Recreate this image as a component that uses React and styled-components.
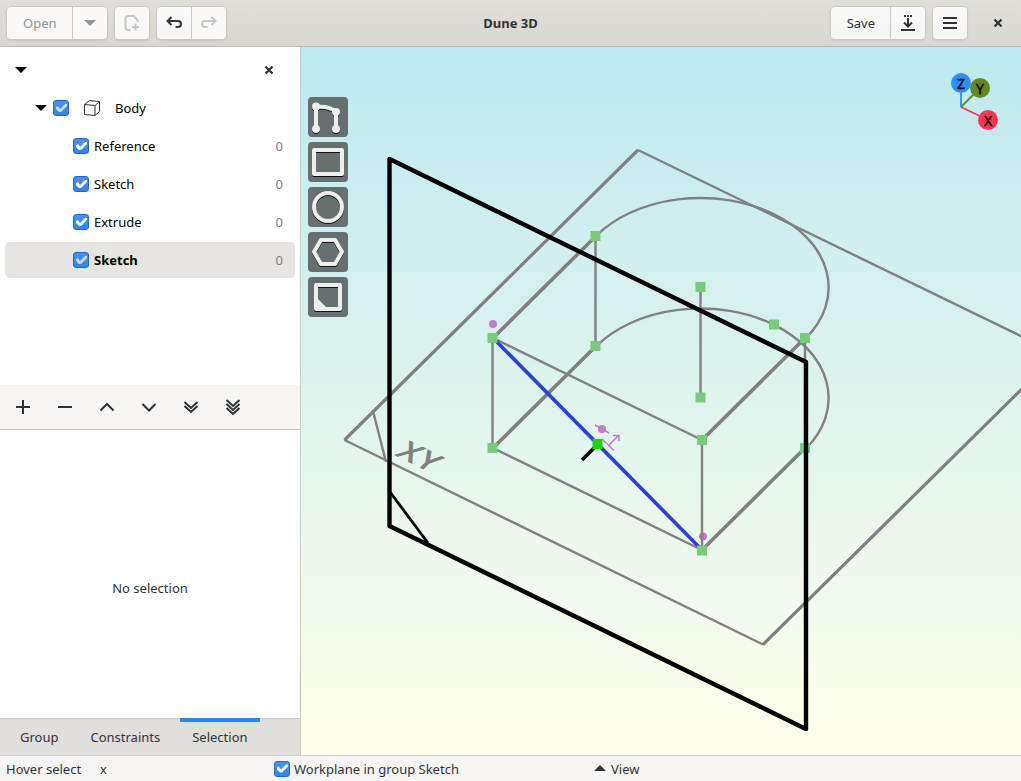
// src/App.jsx
import React, { useState } from 'react';
import styled, { createGlobalStyle } from 'styled-components';

// --- Data ---
const GROUPS = [
  { id: 'reference', name: 'Reference', count: 0 },
  { id: 'sketch-1', name: 'Sketch', count: 0 },
  { id: 'extrude', name: 'Extrude', count: 0 },
  { id: 'sketch-2', name: 'Sketch', count: 0 },
];
const TABS = ['Group', 'Constraints', 'Selection'];

// projected model, in canvas coordinates
const EDGES = [
  [493, 338, 596, 236, 3.6], [493, 448, 596, 346, 3.6],
  [702, 440, 805, 338, 3.6], [702, 550, 805, 448, 3.6],
  [595.5, 236, 595.5, 346, 2.4], [492.5, 338, 492.5, 448, 2.4],
  [805, 338, 805, 448, 2.4], [700.5, 287, 700.5, 397, 2.4],
  [493, 338, 702, 440, 2.4], [493, 448, 702, 550, 2.4],
];
const POINTS = [
  [595.5, 236], [700.5, 287], [774, 324.5], [805, 338], [492.5, 338], [595.5, 346],
  [700.5, 397.5], [702, 440], [492.5, 448], [805, 448], [702, 550.5],
];

// --- Global ---
const GlobalStyle = createGlobalStyle`
  * { box-sizing: border-box; }
  body { margin: 0; background: #f6f5f4; }
  body, button, input {
    font-family: "Noto Sans", "Open Sans", sans-serif; font-size: 13px; line-height: 18px; color: #2e3436;
  }
`;

// --- Styled ---
const Window = styled.div`
  display: flex; flex-direction: column; height: 100vh; overflow: hidden;
`;
const HeaderBar = styled.header`
  display: grid; grid-template-columns: 1fr auto 1fr; align-items: center;
  flex: none; height: 47px; padding: 0 6px;
  background: linear-gradient(#e1dedb, #dad6d2); border-bottom: 1px solid #bfb8b1;
`;
const Title = styled.h1` margin: 0; font-size: 13px; font-weight: bold; `;
const HeaderSide = styled.div`
  display: flex; gap: 6px; justify-content: ${p => (p.$end ? 'flex-end' : 'flex-start')};
`;
const WindowControls = styled.div` display: flex; padding-left: 7px; `;
const Linked = styled.div`
  display: flex; border: 1px solid #cdc7c2; border-radius: 5px; overflow: hidden;
  box-shadow: 0 1px 2px rgba(0, 0, 0, 0.07);
`;
const HeaderButton = styled.button`
  display: flex; align-items: center; justify-content: center;
  height: 32px; min-width: 34px; padding: ${p => (p.$text ? '0 15px 0 16px' : '0')}; border: 0;
  background: linear-gradient(#fbfafa, #f6f5f4);
  & + & { border-left: 1px solid #cdc7c2; min-width: 35px; }
  &:disabled { background: #faf9f8; color: #929595; }
`;
const FlatButton = styled.button`
  display: flex; align-items: center; justify-content: center; flex: none;
  width: ${p => p.$size}px; height: ${p => p.$size}px; padding: 0; border: 0; background: none;
`;
const Main = styled.main` flex: 1; display: flex; min-height: 0; `;
const Sidebar = styled.aside`
  display: flex; flex-direction: column; flex: none; width: 301px;
  background: #fff; border-right: 1px solid #cdc7c2;
`;
const GroupPane = styled.section` flex: 1 1 338px; padding: 5px; min-height: 0; color: #000; `;
const Tree = styled.ul` list-style: none; margin: 0; padding: 0; `;
const Row = styled.li`
  display: flex; align-items: center; height: 36px; margin-bottom: 2px;
  padding: 0 12px 0 ${p => p.$indent}px; border-radius: 5px;
  background: ${p => (p.$selected ? '#e6e5e1' : 'transparent')};
  font-weight: ${p => (p.$selected ? 'bold' : 'normal')};
`;
const Spacer = styled.span` flex: 1; `;
const RowLabel = styled.label` display: flex; align-items: center; gap: 5px; color: #000; `;
const BodyLabel = styled.label`
  display: flex; align-items: center; gap: 15px; margin-left: 6px;
  svg { color: #2e3436; }
`;
const Count = styled.span` margin-left: auto; font-weight: normal; color: #808080; `;
const Check = styled.input.attrs({ type: 'checkbox' })`
  appearance: none; flex: none; width: 16px; height: 16px; margin: 0;
  border: 1px solid #1b6acb; border-radius: 3px; background: linear-gradient(#4b92e8, #3584e4);
  &:checked::after {
    content: ""; display: block; width: 14px; height: 14px; background: #fff;
    opacity: ${p => (p.$dim ? 0.7 : 1)};
    clip-path: polygon(2px 6px, 4px 5px, 6px 8px, 11px 3px, 13px 3px, 13px 5px, 7px 11px, 5px 11px, 2px 8px);
  }
`;
const ActionBar = styled.div`
  display: flex; align-items: center; gap: 8px; flex: none;
  height: 45px; padding: 0 6px; background: #f6f5f4; border-bottom: 1px solid #cdc7c2;
`;
const SelectionPane = styled.section`
  flex: 1 1 288px; display: flex; align-items: center; justify-content: center;
  min-height: 0; padding-top: 28px;
`;
const TabBar = styled.nav`
  display: flex; gap: 8px; flex: none; height: 37px; padding: 0 8px;
  background: #e1dedb; border-top: 1px solid #cdc7c2;
`;
const Tab = styled.button`
  padding: 0 12px; border: 0; background: none;
  box-shadow: ${p => (p.$active ? 'inset 0 3px #3584e4, 0 -1px #3584e4' : 'none')};
`;
const Viewport = styled.section`
  position: relative; flex: 1; min-width: 0; background: linear-gradient(#bee9ef, #ffffeb);
`;
const Canvas = styled.svg` display: block; width: 100%; height: 100%; `;
const ToolBox = styled.div`
  position: absolute; top: 50px; left: 7px; display: flex; flex-direction: column; gap: 5px;
`;
const ToolButton = styled.button`
  width: 40px; height: 40px; padding: 0; border: 0; border-radius: 4px; background: #657070;
  svg { display: block; filter: drop-shadow(0 1px 0 #111); }
`;
const AxisGizmo = styled.svg` position: absolute; top: 20px; right: 16px; `;
const StatusBar = styled.footer`
  display: grid; grid-template-columns: 268fr 320fr 421fr; align-items: center;
  flex: none; height: 26px; padding: 0 6px; background: #f6f5f4; border-top: 1px solid #d5d0cc;
`;
const StatusHints = styled.div` display: flex; gap: 19px; `;
const StatusLabel = styled.label` display: flex; align-items: center; gap: 4px; `;
const ViewButton = styled.button`
  display: flex; align-items: center; justify-self: start; gap: 5px; padding: 0; border: 0; background: none;
`;

// --- Icons ---
const Icon = ({ children, size = 16, ...rest }) => (
  <svg width={size} height={size} viewBox={`0 0 ${size} ${size}`} fill="none"
    stroke="currentColor" strokeWidth="2" aria-hidden="true" {...rest}>
    {children}
  </svg>
);
const CloseIcon = () => <Icon><path d="M4.5 4.5l7 7M11.5 4.5l-7 7" strokeWidth="2.2" /></Icon>;
const Triangle = ({ up }) => (
  <Icon size={12}><path d={up ? 'M0 8h12L6 2z' : 'M0 3h12L6 9z'} fill="currentColor" stroke="none" /></Icon>
);

const TOOLS = [
  {
    name: 'Line and arc',
    icon: <>
      <path d="M8 32V10Q22 9 28 15V32" strokeWidth="4" />
      <g fill="#eeeeec" stroke="none">
        <circle cx="8" cy="9.5" r="4" /><circle cx="28" cy="15" r="4" />
        <circle cx="8" cy="32" r="4" /><circle cx="28" cy="32" r="4" />
      </g>
    </>,
  },
  { name: 'Rectangle', icon: <rect x="6" y="8" width="28" height="24" strokeWidth="4" strokeLinejoin="round" /> },
  { name: 'Circle', icon: <circle cx="20" cy="20" r="14" strokeWidth="4" /> },
  { name: 'Polygon', icon: <path d="M6 20L13 8H27L34 20L27 32H13z" strokeWidth="4" strokeLinejoin="round" /> },
  {
    name: 'Workplane',
    icon: <>
      <rect x="8" y="8" width="24" height="24" strokeWidth="4" strokeLinejoin="round" />
      <path d="M8 20L19 31H8z" fill="#eeeeec" stroke="none" />
    </>,
  },
];

const ACTIONS = [
  { name: 'Add group', d: 'M8 1v14M1 8h14' },
  { name: 'Remove group', d: 'M1 8h14' },
  { name: 'Move up', d: 'M1.5 11.5L8 5l6.5 6.5' },
  { name: 'Move down', d: 'M1.5 5L8 11.5L14.5 5' },
  { name: 'Move to end of body', d: 'M1.5 3L8 9l6.5-6M1.5 7L8 13l6.5-6' },
  { name: 'Move to end', d: 'M1.5 1L8 7l6.5-6M1.5 5L8 11l6.5-6M1.5 9L8 15l6.5-6' },
];

function Scene() {
  return (
    <Canvas viewBox="301 47 720 708" fill="none" role="img" aria-label="3D view">
      {/* constraint markers */}
      <g fill="#c878c8" stroke="#c878c8">
        <circle cx="493" cy="324" r="4" stroke="none" />
        <circle cx="703" cy="536.5" r="4" stroke="none" />
        <circle cx="602" cy="429" r="4" stroke="none" />
        <path d="M595 425L609 433" strokeWidth="1.5" />
        <path d="M602 439L614 450.5M608 446L619 435M613 435.5H619V441" fill="none" strokeWidth="1.5" />
      </g>

      {/* XY workplane */}
      <g stroke="#808080" strokeLinejoin="round">
        <path d="M638 150L344.5 440M763 644.5L1030 381" strokeWidth="3.2" />
        <path d="M638 150L1030 340.5M344.5 440L763 644.5M373 411L386 462" strokeWidth="2.4" />
      </g>
      <text transform="matrix(0.82 0.4 -0.57 0.57 395 455)" x="0 23" fill="#808080" stroke="#808080"
        strokeWidth="1.2" fontFamily="Noto Sans, sans-serif" fontSize="35">XY</text>

      {/* solid */}
      <g stroke="#808080">
        {EDGES.map(([x1, y1, x2, y2, w]) => (
          <line key={`${x1}-${y1}-${x2}-${y2}`} x1={x1} y1={y1} x2={x2} y2={y2} strokeWidth={w} />
        ))}
        <path d="M596 236A127.6 89 0.4 0 1 806 338" strokeWidth="2.4" />
        <path d="M596 346.5A127.6 89 0.4 0 1 806 448.5" strokeWidth="2.4" />
      </g>

      {/* active sketch, the front edge goes over its line */}
      <path d="M496 341L702 550" stroke="#2c3edc" strokeWidth="3.6" />
      <path d="M702 440V550" stroke="#808080" strokeWidth="2.4" />
      <g fill="#78cb7a">
        {POINTS.map(([x, y]) => <rect key={`${x}-${y}`} x={x - 5} y={y - 5} width="10" height="10" />)}
      </g>
      <g stroke="#000" strokeLinejoin="round">
        <path d="M389.5 159L806 362V729L389.5 526z" strokeWidth="4.4" />
        <path d="M390 492L428 543" strokeWidth="2.8" />
        <path d="M597 445L582 460" strokeWidth="3.6" />
      </g>
      <rect x="592.5" y="439" width="10" height="10" fill="#1fd400" />
    </Canvas>
  );
}

function Gizmo() {
  return (
    <AxisGizmo width="60" height="70" viewBox="945 67 60 70" fontFamily="Noto Sans, sans-serif"
      fontSize="14" textAnchor="middle" aria-label="Axes">
      <path d="M961 107L988 120" stroke="#ff3653" strokeWidth="1.8" />
      <path d="M961 107L980 88" stroke="#648a1f" strokeWidth="1.8" />
      <path d="M961 107V84" stroke="#2c8fff" strokeWidth="1.8" />
      <circle cx="980" cy="88" r="10" fill="#648a1f" />
      <circle cx="961" cy="83" r="10" fill="#2c8fff" />
      <circle cx="988" cy="120" r="10" fill="#ff3653" />
      <g fill="#000" stroke="#000" strokeWidth="0.4">
        <text x="961" y="89">Z</text><text x="980" y="94">Y</text><text x="988" y="126">X</text>
      </g>
    </AxisGizmo>
  );
}

export default function App() {
  const [tab, setTab] = useState('Selection');
  const [selected, setSelected] = useState('sketch-2');

  return (
    <Window>
      <GlobalStyle />
      <HeaderBar>
        <HeaderSide>
          <Linked>
            <HeaderButton $text disabled>Open</HeaderButton>
            <HeaderButton disabled aria-label="Recent files"><Triangle /></HeaderButton>
          </Linked>
          <Linked>
            <HeaderButton disabled aria-label="New document">
              <Icon opacity="0.5">
                <path d="M6.5 15H4Q1.5 15 1.5 12.5V3.5Q1.5 1 4 1H9.5L13.5 5V7" />
                <path d="M11.5 8.5V15.5M8 12H15" />
              </Icon>
            </HeaderButton>
          </Linked>
          <Linked>
            <HeaderButton aria-label="Undo">
              <Icon><path d="M5.5 2L1.5 6l4 4M1.5 6H12a3 3 0 0 1 0 6H9.5" /></Icon>
            </HeaderButton>
            <HeaderButton disabled aria-label="Redo">
              <Icon opacity="0.5"><path d="M10.5 2l4 4-4 4M14.5 6H4a3 3 0 0 0 0 6H6.5" /></Icon>
            </HeaderButton>
          </Linked>
        </HeaderSide>
        <Title>Dune 3D</Title>
        <HeaderSide $end>
          <Linked>
            <HeaderButton $text>Save</HeaderButton>
            <HeaderButton aria-label="Save as">
              <Icon><path d="M4 1h2M7 1h2M10 1h2M8 3v8M4 7.5L8 11.5L12 7.5M1 15h14" /></Icon>
            </HeaderButton>
          </Linked>
          <Linked>
            <HeaderButton aria-label="Menu"><Icon><path d="M1 3h14M1 8h14M1 13h14" /></Icon></HeaderButton>
          </Linked>
          <WindowControls>
            <FlatButton $size={34} aria-label="Close window"><CloseIcon /></FlatButton>
          </WindowControls>
        </HeaderSide>
      </HeaderBar>

      <Main>
        <Sidebar>
          <GroupPane>
            <Tree>
              <Row $indent={10}>
                <Triangle />
                <Spacer />
                <FlatButton $size={28} aria-label="Close document"><CloseIcon /></FlatButton>
              </Row>
              <Row $indent={30}>
                <Triangle />
                <BodyLabel>
                  <Check defaultChecked $dim />
                  <Icon strokeWidth="1">
                    <path d="M.5 4.5L11 5.5V15.5L.5 14.5zM.5 4.5L5.5 .5L15.5 1.5L11 5.5M15.5 1.5V11.5L11 15.5" />
                  </Icon>
                  Body
                </BodyLabel>
              </Row>
              {GROUPS.map(g => (
                <Row key={g.id} $indent={68} $selected={g.id === selected} onClick={() => setSelected(g.id)}>
                  <RowLabel>
                    <Check defaultChecked $dim={g.id === selected} />
                    {g.name}
                  </RowLabel>
                  <Count>{g.count}</Count>
                </Row>
              ))}
            </Tree>
          </GroupPane>
          <ActionBar>
            {ACTIONS.map(a => (
              <FlatButton key={a.name} $size={34} aria-label={a.name}><Icon><path d={a.d} /></Icon></FlatButton>
            ))}
          </ActionBar>
          <SelectionPane>No selection</SelectionPane>
          <TabBar>
            {TABS.map(t => <Tab key={t} $active={t === tab} onClick={() => setTab(t)}>{t}</Tab>)}
          </TabBar>
        </Sidebar>

        <Viewport>
          <Scene />
          <ToolBox>
            {TOOLS.map(t => (
              <ToolButton key={t.name} aria-label={t.name}>
                <Icon size={40} stroke="#eeeeec">{t.icon}</Icon>
              </ToolButton>
            ))}
          </ToolBox>
          <Gizmo />
        </Viewport>
      </Main>

      <StatusBar>
        <StatusHints><span>Hover select</span><span>x</span></StatusHints>
        <StatusLabel><Check defaultChecked />Workplane in group Sketch</StatusLabel>
        <ViewButton><Triangle up />View</ViewButton>
      </StatusBar>
    </Window>
  );
}
